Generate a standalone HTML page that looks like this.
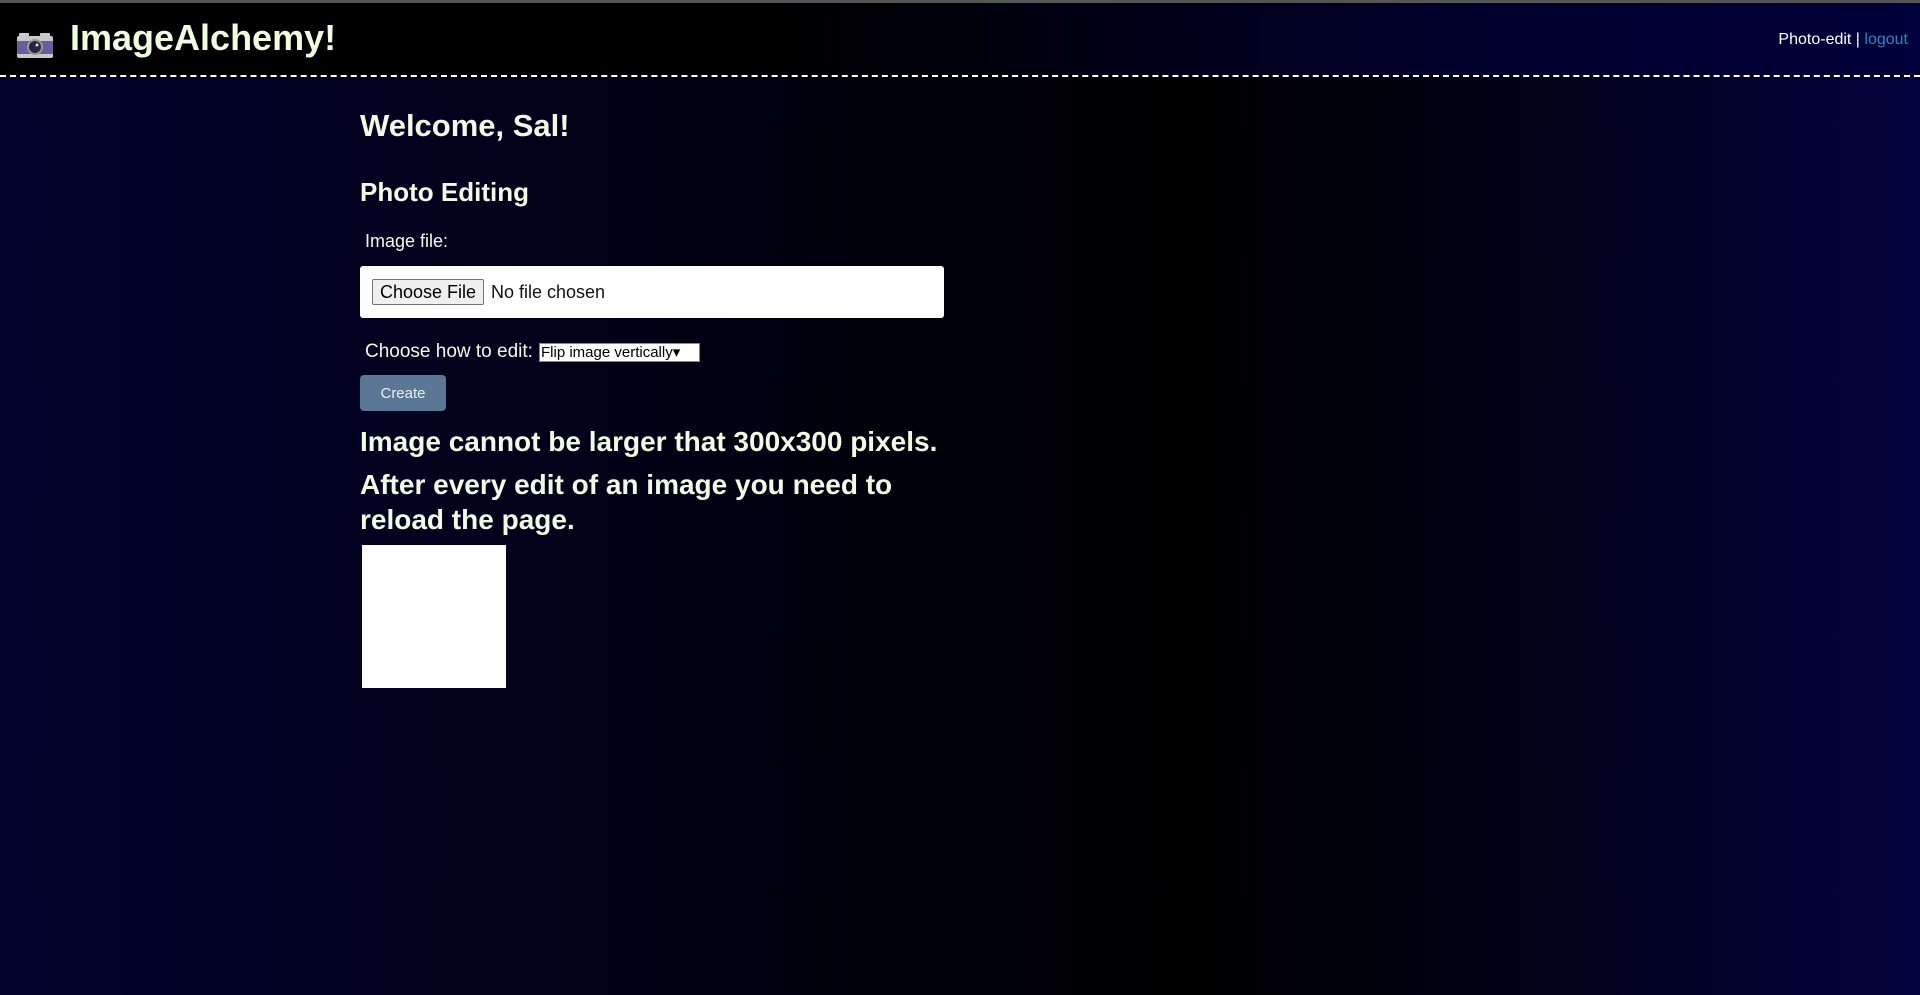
<!DOCTYPE html>
<html><head><meta charset="utf-8"><style>
*{margin:0;padding:0;box-sizing:border-box}
body{width:1920px;height:995px;overflow:hidden;font-family:"Liberation Sans",sans-serif;color:#f0fbe6;
background:linear-gradient(90deg,#03032e 0%,#010118 30%,#000 62%,#010118 80%,#03033e 100%);position:relative}
.top{position:absolute;left:0;top:0;width:1920px;height:3px;background:#555}
.hdr{position:absolute;left:0;top:3px;width:1920px;height:74px;background:linear-gradient(90deg,#000 0%,#000 40%,#00002a 75%,#00003a 100%);border-bottom:2px dashed #fff}
.title{position:absolute;left:70px;top:14px;font-size:36px;font-weight:bold;color:#eefde0}
.cam{position:absolute;left:16px;top:30px}
.nav{position:absolute;right:12px;top:28px;font-size:16px;color:#fff}
.nav span{color:#2a86c8}
.c{position:absolute;left:360px;width:600px}
h1{font-size:31px;font-weight:bold}
h2{font-size:26px;font-weight:bold}
.big{font-size:28px;font-weight:bold;line-height:35px}
.lbl{font-size:18px}
</style></head><body>
<div class="top"></div>
<div class="hdr">
<svg class="cam" width="38" height="26" viewBox="0 0 38 26"><rect x="3" y="0" width="10" height="4" rx="1" fill="#ccc"/><rect x="24" y="0" width="10" height="4" rx="1" fill="#ccc"/><rect x="1" y="3" width="36" height="22" rx="2" fill="#c8c8cc"/><rect x="1" y="8" width="36" height="13" fill="#6a5d9a"/><circle cx="19" cy="14" r="8" fill="#999"/><circle cx="19" cy="14" r="6" fill="#2a2540"/><circle cx="21" cy="12" r="1.5" fill="#ddd"/></svg>
<div class="title">ImageAlchemy!</div>
<div class="nav">Photo-edit | <span>logout</span></div>
</div>
<div class="c" style="top:108px"><h1>Welcome, Sal!</h1></div>
<div class="c" style="top:177px"><h2>Photo Editing</h2></div>
<div class="c lbl" style="top:231px;left:365px">Image file:</div>
<div style="position:absolute;left:360px;top:266px;width:584px;height:52px;background:#fff;border-radius:3px;">
<div style="position:absolute;left:12px;top:13px;height:26px;padding:0 7px;border:1px solid #767676;background:#efefef;color:#000;font-size:18px;line-height:24px;border-radius:2px">Choose File</div>
<div style="position:absolute;left:131px;top:14px;color:#111;font-size:18px;line-height:24px">No file chosen</div>
</div>
<div class="c lbl" style="top:341px;left:365px;font-size:19px">Choose how to edit:</div>
<div style="position:absolute;left:539px;top:343px;width:161px;height:19px;background:#fff;border:1px solid #888;color:#000;font-size:15px;line-height:17px;padding-left:1px">Flip image vertically&#9662;</div>
<div style="position:absolute;left:360px;top:375px;width:86px;height:36px;background:#5a7896;border-radius:4px;color:#e8f0f0;font-size:15px;line-height:37px;text-align:center">Create</div>
<div class="c big" style="top:424px">Image cannot be larger that 300x300 pixels.</div>
<div class="c big" style="top:467px;width:560px">After every edit of an image you need to reload the page.</div>
<div style="position:absolute;left:362px;top:545px;width:144px;height:143px;background:#fff"></div>
</body></html>
